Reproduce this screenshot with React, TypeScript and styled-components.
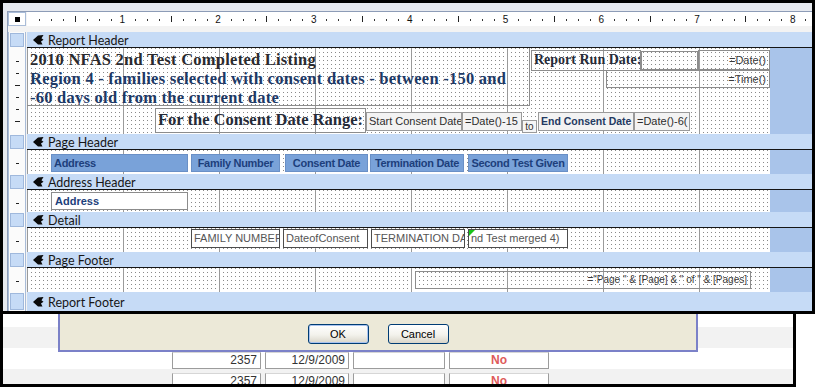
import styled, { createGlobalStyle, css } from "styled-components";

const Global = createGlobalStyle`
  html, body { margin: 0; padding: 0; background: #fff; }
  #root { width: 815px; height: 387px; }
`;

type Pos = { $x: number; $y: number; $w: number; $h: number };

const place = css<Pos>`
  position: absolute;
  left: ${p => p.$x}px;
  top: ${p => p.$y}px;
  width: ${p => p.$w}px;
  height: ${p => p.$h}px;
  box-sizing: border-box;
  overflow: hidden;
  white-space: nowrap;
`;

const Root = styled.div`
  width: 815px;
  height: 387px;
  overflow: hidden;
  display: flex;
  flex-direction: column;
  font-family: "Liberation Sans", Arial, sans-serif;
`;

const Designer = styled.div`
  height: 314px;
  flex: none;
  box-sizing: border-box;
  border: 3px solid #000;
  background: #e6e9ef;
  padding: 8px 0 0 4px;
`;

const Frame = styled.div`
  height: 300px;
  box-sizing: border-box;
  border-top: 1px solid #8d9cb7;
  border-left: 1px solid #8d9cb7;
  display: grid;
  grid-template-columns: 18px 785px;
  column-gap: 1px;
  align-content: start;
  background: #f3f3f3;
`;

const Corner = styled.div`
  height: 14px;
  box-sizing: border-box;
  background: #fff;
  border: 1px solid #a9bcd8;
  display: flex;
  align-items: center;
  justify-content: center;
  margin-bottom: 6px;
  &::after {
    content: "";
    width: 5px;
    height: 5px;
    background: #000;
  }
`;

const RulerStrip = styled.svg`
  display: block;
  background: #fff;
  margin-bottom: 6px;
`;

const Side = styled.div<{ $h: number }>`
  height: ${p => p.$h}px;
  box-sizing: border-box;
  background: #fbfbfb;
  border-left: 1px solid #a9bcd8;
  border-right: 1px solid #a9bcd8;
  display: flex;
  padding: 1px;
`;

const Tab = styled.div`
  flex: 1;
  background: #c6dbf6;
  border: 1px solid #9fb8dc;
`;

const Bar = styled.div<{ $h: number; $line: boolean }>`
  height: ${p => p.$h}px;
  box-sizing: border-box;
  background: #c6dbf6;
  border-bottom: ${p => (p.$line ? "1px solid #151515" : "none")};
  display: flex;
  align-items: center;
  gap: 4px;
  padding: 1px 0 0 6px;
  font: 12.5px Lato, "Open Sans", sans-serif;
  color: #161616;
`;

const Body = styled.div<{ $h: number }>`
  height: ${p => p.$h}px;
  display: flex;
`;

const Canvas = styled.div`
  position: relative;
  width: 743px;
  flex: none;
  overflow: hidden;
  background-color: #8a8a8a;
  background-image: linear-gradient(90deg, #9a9a9a 1px, transparent 1px),
    linear-gradient(90deg, #fff 3px, transparent 3px),
    linear-gradient(#fff 3px, transparent 3px);
  background-size: 96px 100%, 4px 4px, 4px 4px;
  background-position: 96px 0, 1px 0, 0 1px;
`;

const Gutter = styled.div`
  flex: 1;
  background: #a9c4ea;
`;

/* report controls */

const TitleBox = styled.div<Pos>`
  ${place};
  border-right: 1px solid #8c8c8c;
  border-bottom: 1px solid #8c8c8c;
  padding: 2px 0 0 3px;
  font: bold 16.5px "Liberation Serif", "Times New Roman", serif;
  letter-spacing: 0.25px;
  line-height: 19px;
  color: #1d3966;
`;

const TitleLine = styled.div<{ $dark?: boolean }>`
  color: ${p => (p.$dark ? "#2a2a2e" : "#1d3966")};
`;

const SerifLabel = styled.div<Pos & { $size: number }>`
  ${place};
  border: 1px solid #8c8c8c;
  font: bold ${p => p.$size}px "Liberation Serif", "Times New Roman", serif;
  line-height: ${p => p.$h - 3}px;
  padding-left: 2px;
  color: #262b38;
`;

const TextBox = styled.div<Pos & { $align?: string; $size?: number }>`
  ${place};
  border: 1px solid #8c8c8c;
  font-size: ${p => p.$size ?? 11}px;
  line-height: ${p => p.$h - 2}px;
  padding: 0 3px;
  text-align: ${p => p.$align ?? "left"};
  color: #3a3a3a;
`;

const ParamBox = styled.div<Pos & { $bold?: boolean }>`
  ${place};
  border: 1px solid #9a9a9a;
  background: #f3f3f3;
  font-size: ${p => (p.$bold ? 10.5 : 11)}px;
  font-weight: ${p => (p.$bold ? "bold" : "normal")};
  line-height: ${p => p.$h - 2}px;
  padding: 0 2px;
  color: ${p => (p.$bold ? "#243a62" : "#2e2e2e")};
`;

const ToLabel = styled.div<Pos>`
  ${place};
  border: 1px solid #9a9a9a;
  background: #f6f6f6;
  font-size: 10px;
  line-height: 12px;
  text-align: center;
  color: #333;
`;

const HeadLabel = styled.div<Pos & { $center?: boolean }>`
  ${place};
  background: #79a2d9;
  border: 1px solid #6a90c6;
  font-size: 11px;
  font-weight: bold;
  letter-spacing: -0.3px;
  line-height: 16px;
  padding: 0 2px;
  text-align: ${p => (p.$center ? "center" : "left")};
  color: #1d3f7c;
`;

const GroupBox = styled.div<Pos>`
  ${place};
  background: #fff;
  border: 1px solid #8c8c8c;
  font-size: 11px;
  font-weight: bold;
  line-height: 16px;
  padding: 0 3px;
  color: #1d3f7c;
`;

const FieldBox = styled.div<Pos & { $flag?: boolean }>`
  ${place};
  background: #fff;
  border: 1px solid #4d4d4d;
  font-size: 11px;
  line-height: 17px;
  padding: 0 2px;
  color: #555;
  &::before {
    content: "";
    display: ${p => (p.$flag ? "block" : "none")};
    position: absolute;
    left: 0;
    top: 0;
    border-top: 6px solid #19c319;
    border-right: 6px solid transparent;
  }
`;

/* lower sheet */

const Sheet = styled.div`
  position: relative;
  width: 796px;
  height: 73px;
  flex: none;
  box-sizing: border-box;
  border-left: 3px solid #000;
  border-right: 3px solid #000;
  border-bottom: 3px solid #000;
  overflow: hidden;
  background: #fff;
  box-shadow: inset 2px 0 0 #cfcfcf;
`;

const DataRow = styled.div<{ $h: number; $shade?: boolean }>`
  height: ${p => p.$h}px;
  box-sizing: border-box;
  background: ${p => (p.$shade ? "#f2f2f2" : "#fff")};
  display: flex;
  gap: 4px;
  padding: 4px 0 0 169px;
`;

const Cell = styled.div<{ $w: number; $no?: boolean }>`
  width: ${p => p.$w}px;
  height: 17px;
  box-sizing: border-box;
  border: 1px solid #9c9c9c;
  border-top-color: #d6d6d6;
  background: #fff;
  font-size: 12px;
  line-height: 15px;
  padding: 0 3px;
  text-align: ${p => (p.$no ? "center" : "right")};
  font-weight: ${p => (p.$no ? "bold" : "normal")};
  color: ${p => (p.$no ? "#de5b5b" : "#333")};
`;

const Dialog = styled.div`
  position: absolute;
  left: 55px;
  top: 0;
  width: 640px;
  height: 38px;
  box-sizing: border-box;
  border: 2px solid #7b81c8;
  border-top: none;
  background: #ece9d8;
  display: flex;
  justify-content: center;
  align-items: flex-start;
  gap: 19px;
  padding-top: 10px;
`;

const Button = styled.button<{ $default?: boolean }>`
  width: 61px;
  height: 20px;
  padding: 0;
  border: 1px solid #003c74;
  border-radius: 3px;
  background: linear-gradient(#ffffff, #f3f2ec 55%, #d9d5c9);
  box-shadow: ${p => (p.$default ? "inset 0 0 0 1px #a9c3ef" : "none")};
  font: 11px "Liberation Sans", Tahoma, sans-serif;
  color: #000;
`;

function Ruler() {
  const marks = [];
  for (let n = 0; n < 9; n++) {
    const base = n * 95.8;
    if (n > 0)
      marks.push(
        <text key={"n" + n} x={base - 0.5} y={11} fontSize={10} textAnchor="middle" fontFamily="Liberation Sans, sans-serif" fill="#111">
          {n}
        </text>
      );
    for (let k = 1; k < 8; k++) {
      const x = Math.round(base + k * 11.97);
      if (x > 784) continue;
      marks.push(
        k === 4 ? (
          <rect key={n + "-" + k} x={x} y={4} width={1} height={6} fill="#222" />
        ) : (
          <rect key={n + "-" + k} x={x} y={7} width={1} height={2} fill="#333" />
        )
      );
    }
  }
  return (
    <RulerStrip width={785} height={14}>
      {marks}
    </RulerStrip>
  );
}

function SideRule({ h }: { h: number }) {
  const ticks = [];
  for (let y = 12; y < h - 2; y += 12) {
    const long = y % 36 === 0;
    ticks.push(<rect key={y} x={long ? 5 : 6} y={y} width={long ? 5 : 3} height={1} fill="#222" />);
  }
  return (
    <Side $h={h}>
      <svg width={14} height={h - 2}>{ticks}</svg>
    </Side>
  );
}

function Grip() {
  return (
    <svg width={11} height={10} viewBox="0 0 11 10">
      <path d="M0 5 L5 0.5 L10.5 0 L8.5 3.2 L10.5 4.8 L8 6.4 L9.5 9.6 L5 9.6 Z" fill="#0a0a0a" />
    </svg>
  );
}

function Band({ title, body, bar = 16, children }: { title: string; body?: number; bar?: number; children?: any }) {
  return (
    <>
      <Side $h={bar}>
        <Tab />
      </Side>
      <Bar $h={bar} $line={!!body}>
        <Grip />
        {title}
      </Bar>
      {body ? (
        <>
          <SideRule h={body} />
          <Body $h={body}>
            <Canvas>{children}</Canvas>
            <Gutter />
          </Body>
        </>
      ) : null}
    </>
  );
}

// first two rows sit under the dialog, only their stripes show
const rows = [
  { h: 13, shade: false, cells: false },
  { h: 21, shade: true, cells: false },
  { h: 21, shade: false, cells: true },
  { h: 21, shade: true, cells: true },
];

export default function App() {
  return (
    <Root>
      <Global />
      <Designer>
        <Frame>
          <Corner />
          <Ruler />

          <Band title="Report Header" body={86}>
            <TitleBox $x={0} $y={0} $w={503} $h={58}>
              <TitleLine $dark>2010 NFAS 2nd Test Completed Listing</TitleLine>
              <TitleLine>Region 4 - families selected with consent dates - between -150 and</TitleLine>
              <TitleLine>-60 days old from the current date</TitleLine>
            </TitleBox>
            <SerifLabel $x={504} $y={2} $w={110} $h={21} $size={14}>
              Report Run Date:
            </SerifLabel>
            <TextBox $x={614} $y={3} $w={57} $h={19} />
            <TextBox $x={671} $y={2} $w={72} $h={20} $align="right">
              =Date()
            </TextBox>
            <TextBox $x={579} $y={22} $w={164} $h={18} $align="right">
              =Time()
            </TextBox>
            <SerifLabel $x={128} $y={60} $w={211} $h={25} $size={16.5}>
              For the Consent Date Range:
            </SerifLabel>
            <ParamBox $x={339} $y={64} $w={96} $h={19}>
              Start Consent Date
            </ParamBox>
            <ParamBox $x={435} $y={64} $w={60} $h={19}>
              =Date()-15
            </ParamBox>
            <ToLabel $x={495} $y={72} $w={15} $h={13}>
              to
            </ToLabel>
            <ParamBox $x={511} $y={64} $w={96} $h={19} $bold>
              End Consent Date
            </ParamBox>
            <ParamBox $x={607} $y={64} $w={56} $h={19}>
              =Date()-6(
            </ParamBox>
          </Band>

          <Band title="Page Header" body={24}>
            <HeadLabel $x={24} $y={4} $w={137} $h={18}>
              Address
            </HeadLabel>
            <HeadLabel $x={164} $y={4} $w={89} $h={18} $center>
              Family Number
            </HeadLabel>
            <HeadLabel $x={258} $y={4} $w={83} $h={18} $center>
              Consent Date
            </HeadLabel>
            <HeadLabel $x={343} $y={4} $w={94} $h={18} $center>
              Termination Date
            </HeadLabel>
            <HeadLabel $x={441} $y={4} $w={100} $h={18} $center>
              Second Test Given
            </HeadLabel>
          </Band>

          <Band title="Address Header" body={22}>
            <GroupBox $x={24} $y={2} $w={137} $h={18}>
              Address
            </GroupBox>
          </Band>

          <Band title="Detail" body={24}>
            <FieldBox $x={164} $y={1} $w={89} $h={19}>
              FAMILY NUMBER
            </FieldBox>
            <FieldBox $x={256} $y={1} $w={85} $h={19}>
              DateofConsent
            </FieldBox>
            <FieldBox $x={344} $y={1} $w={94} $h={19}>
              TERMINATION DATE
            </FieldBox>
            <FieldBox $x={441} $y={1} $w={100} $h={19} $flag>
              nd Test merged 4)
            </FieldBox>
          </Band>

          <Band title="Page Footer" body={24}>
            <TextBox $x={388} $y={3} $w={336} $h={18} $align="right" $size={10}>
              ="Page " &amp; [Page] &amp; " of " &amp; [Pages]
            </TextBox>
          </Band>

          <Band title="Report Footer" bar={19} />
        </Frame>
      </Designer>

      <Sheet>
        {rows.map((r, i) => (
          <DataRow key={i} $h={r.h} $shade={r.shade}>
            {r.cells && (
              <>
                <Cell $w={89}>2357</Cell>
                <Cell $w={84}>12/9/2009</Cell>
                <Cell $w={92} />
                <Cell $w={100} $no>
                  No
                </Cell>
              </>
            )}
          </DataRow>
        ))}
        <Dialog>
          <Button $default>OK</Button>
          <Button>Cancel</Button>
        </Dialog>
      </Sheet>
    </Root>
  );
}
